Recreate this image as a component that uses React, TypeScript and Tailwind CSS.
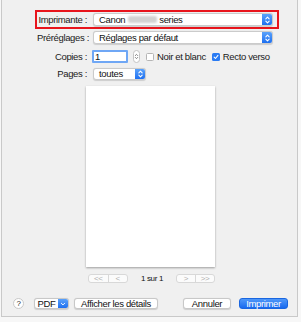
import React from 'react';

function Chevrons({ className = '' }: { className?: string }) {
  return (
    <svg viewBox="0 0 8 12" className={className} fill="none" stroke="currentColor" strokeWidth="1.3" strokeLinecap="round" strokeLinejoin="round">
      <path d="M2 4.6 L4 2.6 L6 4.6" />
      <path d="M2 7.4 L4 9.4 L6 7.4" />
    </svg>
  );
}

function Popup({ width, children }: { width: string; children: React.ReactNode }) {
  return (
    <div className={`${width} h-full flex items-center bg-white rounded-[3px] border border-[#cbcbcb] shadow-[0_0.5px_1px_rgba(0,0,0,0.15)] overflow-hidden`}>
      <div className="flex-1 flex items-center pl-[5px] text-[#111] whitespace-nowrap">{children}</div>
      <div className="w-[10px] h-full flex items-center justify-center bg-gradient-to-b from-[#5aa2fb] to-[#1d6ff0] text-white">
        <Chevrons className="w-[7px] h-[10px]" />
      </div>
    </div>
  );
}

function Label({ children }: { children: React.ReactNode }) {
  return <div className="w-[50px] text-right text-[#1a1a1a] whitespace-nowrap">{children}</div>;
}

function Button({ width, children, primary = false }: { width: string; children: React.ReactNode; primary?: boolean }) {
  return (
    <div
      className={`${width} h-[11px] flex items-center justify-center rounded-[3px] whitespace-nowrap ${
        primary
          ? 'bg-gradient-to-b from-[#4f98f9] to-[#1769ef] text-white border border-[#1a66e0]'
          : 'bg-white text-[#111] border border-[#c8c8c8] shadow-[0_0.5px_1px_rgba(0,0,0,0.15)]'
      }`}
    >
      {children}
    </div>
  );
}

export default function App() {
  return (
    <div className="w-[301px] h-[322px] bg-[#f7f7f7] text-[9.5px] tracking-[-0.35px] leading-none" style={{ fontFamily: '"Liberation Sans", Arial, sans-serif' }}>
      <div className="ml-[1px] w-[297px] h-[317px] bg-[#f0f0f0] border-x border-b border-[#c9c9c9] flex flex-col">
        {/* Printer row */}
        <div className="mt-[10px] ml-[33px] w-[244px] h-[19px] border-2 border-[#e8141c] flex items-center">
          <Label>Imprimante :</Label>
          <div className="ml-[6px] h-[13px]">
            <Popup width="w-[180px]">
              <span>Canon</span>
              <span className="ml-[3px] w-[29px] h-[7px] bg-[#d2d2d2] rounded-[2px] blur-[1px]" />
              <span className="ml-[2px]">series</span>
            </Popup>
          </div>
        </div>

        {/* Presets */}
        <div className="mt-[2px] pl-[35px] h-[13px] flex items-center">
          <Label>Préréglages :</Label>
          <div className="ml-[6px] h-full">
            <Popup width="w-[180px]">Réglages par défaut</Popup>
          </div>
        </div>

        {/* Copies */}
        <div className="mt-[6px] pl-[35px] h-[13px] flex items-center">
          <Label>Copies :</Label>
          <div className="ml-[5px] w-[36px] h-full bg-white border-2 border-[#6fa7f5] rounded-[1px] flex items-center pl-[1px] text-[#111]">
            <span>1</span>
          </div>
          <div className="ml-[5px] w-[7px] h-full rounded-full border border-[#c4c4c4] bg-white flex items-center justify-center text-[#6a6a6a]">
            <Chevrons className="w-[6px] h-[9px]" />
          </div>
          <div className="ml-[6px] w-[8px] h-[8px] bg-white border border-[#b5b5b5] rounded-[1.5px]" />
          <span className="ml-[3px] text-[#1a1a1a]">Noir et blanc</span>
          <div className="ml-[6px] w-[8px] h-[8px] bg-[#2a7bf3] rounded-[1.5px] flex items-center justify-center">
            <svg viewBox="0 0 8 8" className="w-[6px] h-[6px]" fill="none" stroke="white" strokeWidth="1.4" strokeLinecap="round" strokeLinejoin="round">
              <path d="M1.5 4.2 L3.3 6 L6.6 1.8" />
            </svg>
          </div>
          <span className="ml-[3px] text-[#1a1a1a]">Recto verso</span>
        </div>

        {/* Pages */}
        <div className="mt-[5px] pl-[35px] h-[12px] flex items-center">
          <Label>Pages :</Label>
          <div className="ml-[6px] h-full">
            <Popup width="w-[53px]">toutes</Popup>
          </div>
        </div>

        {/* Preview */}
        <div className="mt-[6px] ml-[84px] w-[129px] h-[181px] bg-white shadow-[0_0.5px_2px_rgba(0,0,0,0.35)]" />

        {/* Page navigation */}
        <div className="mt-[7px] ml-[86px] h-[9px] flex items-center text-[#b0b0b0] text-[8px]">
          <div className="w-[40px] h-full flex bg-[#fbfbfb] border border-[#d8d8d8] rounded-[3px]">
            <div className="flex-1 flex items-center justify-center border-r border-[#d8d8d8]">&lt;&lt;</div>
            <div className="flex-1 flex items-center justify-center">&lt;</div>
          </div>
          <div className="w-[48px] text-center text-[#111]">1 sur 1</div>
          <div className="w-[39px] h-full flex bg-[#fbfbfb] border border-[#d8d8d8] rounded-[3px]">
            <div className="flex-1 flex items-center justify-center border-r border-[#d8d8d8]">&gt;</div>
            <div className="flex-1 flex items-center justify-center">&gt;&gt;</div>
          </div>
        </div>

        {/* Bottom buttons */}
        <div className="mt-[15px] h-[11px] flex items-center">
          <div className="ml-[11px] w-[11px] h-[11px] rounded-full bg-white border border-[#c8c8c8] flex items-center justify-center text-[#222] text-[8px]">?</div>
          <div className="ml-[10px] w-[35px] h-[11px] flex rounded-[3px] border border-[#c8c8c8] overflow-hidden bg-white shadow-[0_0.5px_1px_rgba(0,0,0,0.15)]">
            <div className="flex-1 flex items-center justify-center text-[#111]">PDF</div>
            <div className="w-[10px] h-full bg-gradient-to-b from-[#5aa2fb] to-[#1d6ff0] flex items-center justify-center">
              <svg viewBox="0 0 8 8" className="w-[6px] h-[6px]" fill="none" stroke="white" strokeWidth="1.3" strokeLinecap="round" strokeLinejoin="round">
                <path d="M1.8 3 L4 5.2 L6.2 3" />
              </svg>
            </div>
          </div>
          <div className="ml-[5px]">
            <Button width="w-[84px]">Afficher les détails</Button>
          </div>
          <div className="ml-[25px]">
            <Button width="w-[48px]">Annuler</Button>
          </div>
          <div className="ml-[8px]">
            <Button width="w-[49px]" primary>
              Imprimer
            </Button>
          </div>
        </div>
      </div>
    </div>
  );
}
